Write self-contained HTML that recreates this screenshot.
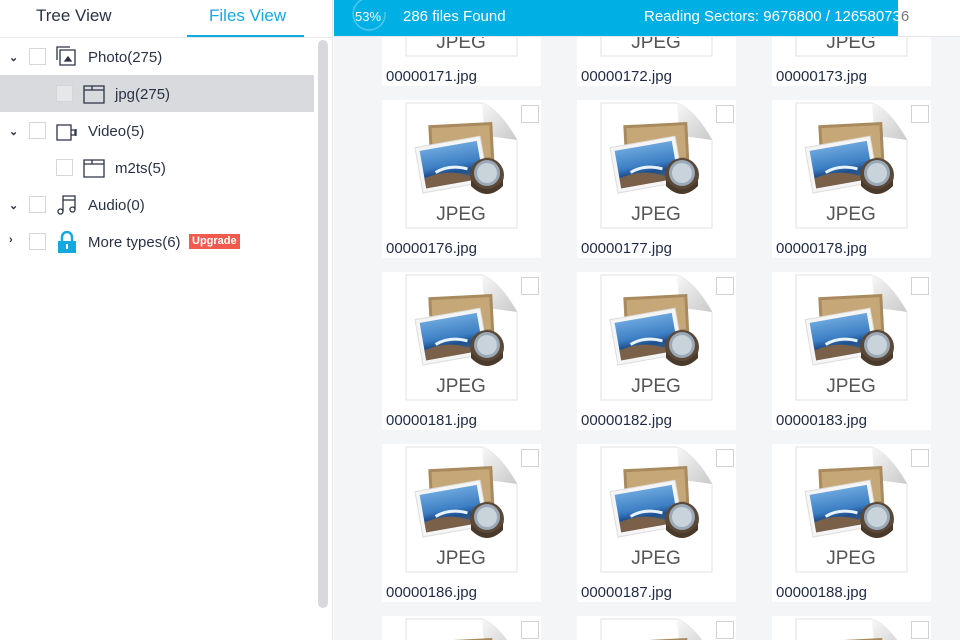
<!DOCTYPE html>
<html><head><meta charset="utf-8"><style>
*{margin:0;padding:0;box-sizing:border-box}
html,body{width:960px;height:640px;overflow:hidden}
body{font-family:"Liberation Sans",sans-serif;background:#fff;position:relative;color:#2a3346}
.left{position:absolute;left:0;top:0;width:333px;height:640px;background:#fff;border-right:1px solid #e4e6e9}
.tab{position:absolute;top:6px;font-size:17px}
.uline{position:absolute;left:187px;top:35px;width:117px;height:2px;background:#14a9e0}
.hline{position:absolute;left:0;top:37px;width:333px;height:1px;background:#e8e9eb}
.sb{position:absolute;left:318px;top:40px;width:10px;height:568px;border-radius:5px;background:#d7d9dc}
.row{position:absolute;left:0;width:314px;height:37px;font-size:15px}
.row span{position:absolute;top:11px}
.cb{position:absolute;width:17px;height:17px;border:1px solid #d4d6d9;background:#fff;top:10px}
.arr{position:absolute;left:9px;top:13px;font-size:11px;font-weight:bold}
.ico{position:absolute;top:8px}
.right{position:absolute;left:334px;top:0;width:626px;height:640px;background:#f4f5f6;overflow:hidden}
.card{position:absolute;width:159px;height:158px;background:#fff}
.card svg{position:absolute;left:22px;top:2px}
.card .lb{position:absolute;left:4px;top:140px;font-size:15px;color:#1f2b44}
.card .c{position:absolute;left:139px;top:5px;width:18px;height:18px;border:1px solid #cfd1d4;background:#fff}
.bar{position:absolute;left:0;top:0;width:564px;height:36px;background:#00afe4}
.hdr{position:absolute;left:0;top:0;width:626px;height:37px;background:#fff;border-bottom:1px solid #e4e6e9}
</style></head><body>
<svg width="0" height="0" style="position:absolute"><defs>
<symbol id="doc" viewBox="0 0 115 128">
<defs><linearGradient id="fg" x1="0" y1="0" x2="1" y2="1"><stop offset="0" stop-color="#f7f7f7"/><stop offset="1" stop-color="#c9c9c9"/></linearGradient>
<linearGradient id="sky" x1="0" y1="0" x2="0" y2="1"><stop offset="0" stop-color="#6aa5dc"/><stop offset=".5" stop-color="#3d7fc4"/><stop offset=".7" stop-color="#1e4f8f"/><stop offset="1" stop-color="#4f6b7a"/></linearGradient></defs>
<path d="M2 1H78Q96 8 113 38V126H2Z" fill="#fff" stroke="#e2e2e2"/>
<path d="M78 1Q80 30 82 34Q100 36 113 38Q96 8 78 1Z" fill="url(#fg)"/>
<g transform="rotate(-3 50 55)"><rect x="26" y="22" width="64" height="38" fill="#a88a5e"/><rect x="29" y="25" width="58" height="32" fill="#c6a878"/></g>
<g transform="rotate(-10 45 60)"><rect x="14" y="40" width="66" height="46" fill="#f5f5f5" stroke="#ddd"/><rect x="18" y="44" width="58" height="38" fill="url(#sky)"/><path d="M18 72Q40 66 60 76L76 82H18Z" fill="#7a6048"/><path d="M30 68Q45 62 62 70" stroke="#e8f2fa" stroke-width="3" fill="none"/></g>
<circle cx="83" cy="73" r="17" fill="#5a4838"/><circle cx="83" cy="71" r="13" fill="#9aa9b5"/><circle cx="83" cy="71" r="10" fill="#c8d3da"/><path d="M67 78Q83 96 99 78V84Q83 100 67 84Z" fill="#4a3a2c"/>
<text x="57" y="118" text-anchor="middle" font-family="Liberation Sans,sans-serif" font-size="19" fill="#555">JPEG</text>
</symbol></defs></svg>

<div class="left">
<div class="tab" style="left:36px">Tree View</div>
<div class="tab" style="left:209px;color:#14a9e0">Files View</div>
<div class="hline"></div><div class="uline"></div>
<div class="row" style="top:38px"><b class="arr">⌄</b><i class="cb" style="left:29px"></i>
<svg class="ico" style="left:56px" width="22" height="22" viewBox="0 0 22 22" fill="none" stroke="#2a3346" stroke-width="1.3"><path d="M1 14V1H14M4 4H19V19H4Z"/><path d="M9 15L12 11L15 15Z" fill="#2a3346"/></svg><span style="left:88px">Photo(275)</span></div>
<div class="row" style="top:75px;background:#d8dadd"><i class="cb" style="left:56px;background:#e6e7e9"></i>
<svg class="ico" style="left:83px" width="22" height="22" viewBox="0 0 22 22" fill="none" stroke="#2a3346" stroke-width="1.3"><path d="M1 3H21V20H1ZM1 7H21M9 3V7"/></svg><span style="left:115px">jpg(275)</span></div>
<div class="row" style="top:112px"><b class="arr">⌄</b><i class="cb" style="left:29px"></i>
<svg class="ico" style="left:56px" width="22" height="22" viewBox="0 0 22 22" fill="none" stroke="#2a3346" stroke-width="1.3"><path d="M1 5H15V20H1ZM15 10H19V15H15M20 9V16"/></svg><span style="left:88px">Video(5)</span></div>
<div class="row" style="top:149px"><i class="cb" style="left:56px"></i>
<svg class="ico" style="left:83px" width="22" height="22" viewBox="0 0 22 22" fill="none" stroke="#2a3346" stroke-width="1.3"><path d="M1 3H21V20H1ZM1 7H21M9 3V7"/></svg><span style="left:115px">m2ts(5)</span></div>
<div class="row" style="top:186px"><b class="arr">⌄</b><i class="cb" style="left:29px"></i>
<svg class="ico" style="left:56px" width="22" height="22" viewBox="0 0 22 22" fill="none" stroke="#2a3346" stroke-width="1.3"><path d="M7 17V2H19V15M7 6H19"/><circle cx="4.5" cy="17.5" r="2.5"/><circle cx="16.5" cy="15.5" r="2.5"/></svg><span style="left:88px">Audio(0)</span></div>
<div class="row" style="top:223px"><b class="arr" style="top:11px">›</b><i class="cb" style="left:29px"></i>
<svg class="ico" style="left:57px" width="20" height="22" viewBox="0 0 20 22"><path d="M5 10V6a5 5 0 0 1 10 0v4" fill="none" stroke="#12a9e0" stroke-width="2.5"/><rect x="1" y="10" width="18" height="12" fill="#12a9e0"/><rect x="9" y="13" width="2" height="5" fill="#fff"/></svg>
<span style="left:88px">More types(6)</span><b style="position:absolute;left:189px;top:11px;background:#f25a4e;color:#fff;font-size:11px;padding:1px 3px 2px">Upgrade</b></div>
<div class="sb"></div>
</div>

<div class="right">
<div id="cards"></div>
<div class="hdr"></div>
<div class="bar"></div>
<svg style="position:absolute;left:17px;top:0" width="38" height="32" viewBox="0 0 38 32"><path d="M19 -2A16 16 0 1 0 34 12" fill="none" stroke="#4ec6ee" stroke-width="1.5"/></svg>
<div style="position:absolute;left:21px;top:9px;color:#fff;font-size:13px">53%</div>
<div style="position:absolute;left:69px;top:8px;color:#fff;font-size:15px">286 files Found</div>
<div style="position:absolute;left:310px;top:8px;color:#fff;font-size:15px">Reading Sectors: 9676800 / 12658073<span style="color:#777">6</span></div>
</div>
<script>
var h='',xs=[48,243,438],tops=[-72,100,272,444,616],n=[[171,172,173],[176,177,178],[181,182,183],[186,187,188],[191,192,193]];
for(var r=0;r<5;r++)for(var c=0;c<3;c++){h+='<div class="card" style="left:'+xs[c]+'px;top:'+tops[r]+'px"><svg width="115" height="128"><use href="#doc"/></svg><i class="c"></i><div class="lb">00000'+n[r][c]+'.jpg</div></div>';}
document.getElementById('cards').innerHTML=h;
</script>
</body></html>
